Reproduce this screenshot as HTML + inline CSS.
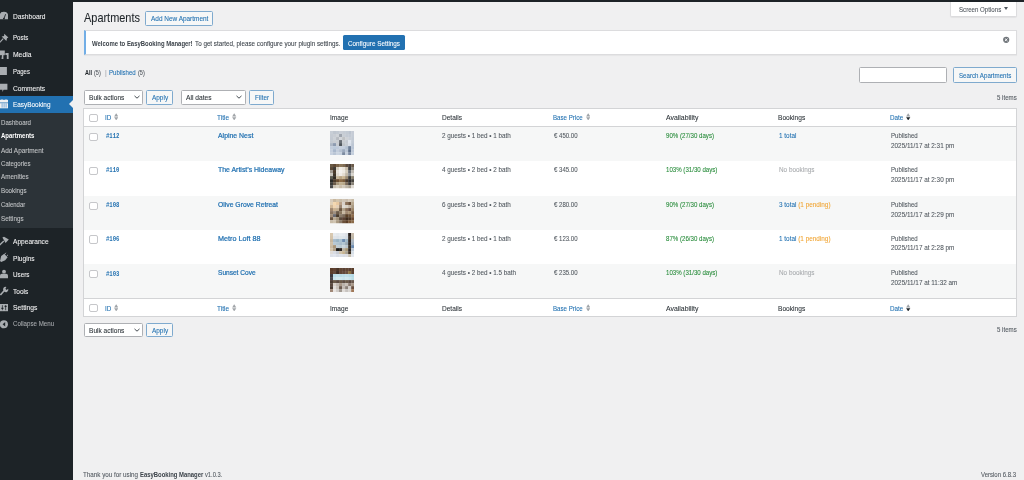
<!DOCTYPE html>
<html><head><meta charset="utf-8"><style>
html,body{margin:0;padding:0;width:1024px;height:480px;overflow:hidden;background:#f0f0f1;font-family:"Liberation Sans",sans-serif;}
.a{position:absolute}
.t{position:absolute;white-space:nowrap;line-height:normal;transform-origin:0 0;font-family:"Liberation Sans",sans-serif}
</style></head><body>
<div class="a" style="left:0.00px;top:0.00px;width:1024.00px;height:2.00px;background:#1d2327"></div>
<div class="a" style="left:0.00px;top:0.00px;width:72.50px;height:480.00px;background:#1d2327"></div>
<div class="a" style="left:0.00px;top:96.00px;width:72.50px;height:16.50px;background:#2271b1"></div>
<div class="a" style="left:0.00px;top:112.50px;width:72.50px;height:115.20px;background:#2c3338"></div>
<div class="a" style="left:68.5px;top:100.2px;width:0;height:0;border-top:4px solid transparent;border-bottom:4px solid transparent;border-right:4px solid #f0f0f1"></div>
<div class="t" style="left:12.80px;top:13.07px;font-size:7.100px;color:#f0f0f1;font-family:'Liberation Sans',sans-serif;font-weight:normal;transform:scaleX(0.9358);-webkit-text-stroke-width:0.08px;">Dashboard</div>
<div class="t" style="left:12.80px;top:34.37px;font-size:7.100px;color:#f0f0f1;font-family:'Liberation Sans',sans-serif;font-weight:normal;transform:scaleX(0.8616);-webkit-text-stroke-width:0.08px;">Posts</div>
<div class="t" style="left:12.80px;top:51.07px;font-size:7.100px;color:#f0f0f1;font-family:'Liberation Sans',sans-serif;font-weight:normal;transform:scaleX(0.9516);-webkit-text-stroke-width:0.08px;">Media</div>
<div class="t" style="left:12.80px;top:68.07px;font-size:7.100px;color:#f0f0f1;font-family:'Liberation Sans',sans-serif;font-weight:normal;transform:scaleX(0.8395);-webkit-text-stroke-width:0.08px;">Pages</div>
<div class="t" style="left:12.80px;top:84.67px;font-size:7.100px;color:#f0f0f1;font-family:'Liberation Sans',sans-serif;font-weight:normal;transform:scaleX(0.9381);-webkit-text-stroke-width:0.08px;">Comments</div>
<div class="t" style="left:12.80px;top:101.07px;font-size:7.100px;color:#ffffff;font-family:'Liberation Sans',sans-serif;font-weight:normal;transform:scaleX(0.9049);-webkit-text-stroke-width:0.08px;">EasyBooking</div>
<div class="t" style="left:12.80px;top:238.07px;font-size:7.100px;color:#f0f0f1;font-family:'Liberation Sans',sans-serif;font-weight:normal;transform:scaleX(0.9298);-webkit-text-stroke-width:0.08px;">Appearance</div>
<div class="t" style="left:12.80px;top:254.57px;font-size:7.100px;color:#f0f0f1;font-family:'Liberation Sans',sans-serif;font-weight:normal;transform:scaleX(0.9276);-webkit-text-stroke-width:0.08px;">Plugins</div>
<div class="t" style="left:12.80px;top:271.07px;font-size:7.100px;color:#f0f0f1;font-family:'Liberation Sans',sans-serif;font-weight:normal;transform:scaleX(0.8846);-webkit-text-stroke-width:0.08px;">Users</div>
<div class="t" style="left:12.80px;top:287.82px;font-size:7.100px;color:#f0f0f1;font-family:'Liberation Sans',sans-serif;font-weight:normal;transform:scaleX(0.9231);-webkit-text-stroke-width:0.08px;">Tools</div>
<div class="t" style="left:12.80px;top:304.37px;font-size:7.100px;color:#f0f0f1;font-family:'Liberation Sans',sans-serif;font-weight:normal;transform:scaleX(0.9511);-webkit-text-stroke-width:0.08px;">Settings</div>
<div class="t" style="left:12.80px;top:320.32px;font-size:7.100px;color:#a7aaad;font-family:'Liberation Sans',sans-serif;font-weight:normal;transform:scaleX(0.8679);-webkit-text-stroke-width:0.08px;">Collapse Menu</div>
<div class="t" style="left:1.25px;top:118.86px;font-size:7.000px;color:#c3c5c7;font-family:'Liberation Sans',sans-serif;font-weight:normal;transform:scaleX(0.8761);-webkit-text-stroke-width:0.08px;">Dashboard</div>
<div class="t" style="left:1.25px;top:132.46px;font-size:7.000px;color:#ffffff;font-family:'Liberation Sans',sans-serif;font-weight:bold;transform:scaleX(0.8587);">Apartments</div>
<div class="t" style="left:1.25px;top:146.66px;font-size:7.000px;color:#c3c5c7;font-family:'Liberation Sans',sans-serif;font-weight:normal;transform:scaleX(0.9178);-webkit-text-stroke-width:0.08px;">Add Apartment</div>
<div class="t" style="left:1.25px;top:159.96px;font-size:7.000px;color:#c3c5c7;font-family:'Liberation Sans',sans-serif;font-weight:normal;transform:scaleX(0.8715);-webkit-text-stroke-width:0.08px;">Categories</div>
<div class="t" style="left:1.25px;top:173.16px;font-size:7.000px;color:#c3c5c7;font-family:'Liberation Sans',sans-serif;font-weight:normal;transform:scaleX(0.9013);-webkit-text-stroke-width:0.08px;">Amenities</div>
<div class="t" style="left:1.25px;top:186.96px;font-size:7.000px;color:#c3c5c7;font-family:'Liberation Sans',sans-serif;font-weight:normal;transform:scaleX(0.8890);-webkit-text-stroke-width:0.08px;">Bookings</div>
<div class="t" style="left:1.25px;top:200.56px;font-size:7.000px;color:#c3c5c7;font-family:'Liberation Sans',sans-serif;font-weight:normal;transform:scaleX(0.8520);-webkit-text-stroke-width:0.08px;">Calendar</div>
<div class="t" style="left:1.25px;top:214.76px;font-size:7.000px;color:#c3c5c7;font-family:'Liberation Sans',sans-serif;font-weight:normal;transform:scaleX(0.8896);-webkit-text-stroke-width:0.08px;">Settings</div>
<svg class="a" style="left:0;top:0" width="12" height="340" viewBox="0 0 12 340">
 <g fill="#a9adb1">
  <path d="M-0.2 19.2 A4.1 4.1 0 0 1 8 19.2 V15.8 A4.1 4.1 0 0 0 -0.2 15.8 Z"/>
  <path d="M-0.2 16.3 A4.1 4.1 0 0 1 8 16.3 V19.3 H-0.2 Z"/>
 </g>
 <path d="M3.9 18.8 L5.6 14.2" stroke="#1d2327" stroke-width="0.9"/>
 <circle cx="3.9" cy="18.6" r="0.9" fill="#1d2327"/>
 <g fill="#a9adb1">
  <path d="M4.2 33.8 L8.4 37.6 L7 38.3 L6.4 41 L1.6 36.6 L4.1 35.9 Z"/>
  <path d="M3.2 38.6 L-0.2 42.4" stroke="#a9adb1" stroke-width="1.1"/>
  <path d="M0 50.5 H4.8 V55.2 H0 Z"/>
  <path d="M2 55 H3.4 V59 H1.5 Z"/><path d="M5.4 53 H8.6 V59 H6.8 V55 H5.4 Z"/>
  <path d="M0 67 H6.9 V75 H0 Z"/>
  <path d="M0 83.8 H7.4 V89.8 H3.6 L2.4 92 V89.8 H0 Z"/>
  <path d="M2.4 237.5 L4 236.8 L8.8 239.6 L5.6 243 Z"/>
  <path d="M3.8 241 L-0.3 245" stroke="#a9adb1" stroke-width="1.4"/>
  <path d="M1.2 256 L4.2 253.8 L7.6 257.2 L5.2 260.2 L1.2 262 L0 261 Z"/>
  <path d="M4.6 254.5 L5.8 252.8 M6.6 256.2 L8 254.8" stroke="#a9adb1" stroke-width="0.9"/>
  <circle cx="4" cy="271.7" r="1.9"/>
  <path d="M0 278.2 V275.6 Q0 273.8 2 273.8 H6 Q8 273.8 8 275.6 V278.2 Z"/>
  <path d="M0.4 295 L4.6 290.2" stroke="#a9adb1" stroke-width="1.6"/>
  <path d="M3.6 290.8 A2.5 2.5 0 0 1 6.4 286.9 L5.4 288.7 L6.6 289.9 L8.2 288.8 A2.5 2.5 0 0 1 4.3 291.6 Z"/>
  <path d="M0 304 H8 V311.2 H0 Z"/>
  <circle cx="3.9" cy="324.3" r="4"/>
 </g>
 <path d="M2.4 305.2 V310.2 M5.6 305.2 V310.2" stroke="#1d2327" stroke-width="0.7"/>
 <path d="M1.4 308.4 H3.4 M4.6 306.4 H6.6" stroke="#1d2327" stroke-width="1.2"/>
 <path d="M5.2 322.1 L2.6 324.3 L5.2 326.5 Z" fill="#1d2327"/>
 <path d="M0 99.8 H8 V108.3 H0 Z" fill="#f0f0f1"/>
 <path d="M0 102.8 H8" stroke="#2271b1" stroke-width="0.7"/>
 <path d="M2.1 103.4 V107.6 M4.1 103.4 V107.6 M6.1 103.4 V107.6" stroke="#5d9ad0" stroke-width="0.8"/>
 <path d="M2 99.3 V100.8 M6 99.3 V100.8" stroke="#f0f0f1" stroke-width="1"/>
</svg>
<div class="t" style="left:84.20px;top:11.39px;font-size:12.400px;color:#1d2327;font-family:'Liberation Sans',sans-serif;font-weight:normal;transform:scaleX(0.8833);-webkit-text-stroke-width:0.08px;">Apartments</div>
<div class="a" style="left:145.10px;top:11.30px;width:67.90px;height:14.50px;background:#f6f7f7;border:1px solid #7faace;border-radius:1.5px;box-sizing:border-box"></div>
<div class="t" style="left:150.60px;top:15.16px;font-size:7.000px;color:#2271b1;font-family:'Liberation Sans',sans-serif;font-weight:normal;transform:scaleX(0.9221);-webkit-text-stroke-width:0.08px;">Add New Apartment</div>
<div class="a" style="left:949.80px;top:2.00px;width:67.00px;height:14.60px;background:#fff;border:1px solid #dcdcde;border-top:none;border-radius:0 0 2px 2px;box-sizing:border-box;box-shadow:0 0.5px 1px rgba(0,0,0,.06)"></div>
<div class="t" style="left:958.70px;top:5.66px;font-size:7.000px;color:#50575e;font-family:'Liberation Sans',sans-serif;font-weight:normal;transform:scaleX(0.8747);-webkit-text-stroke-width:0.08px;">Screen Options</div>
<div class="a" style="left:1004.3px;top:7.4px;width:0;height:0;border-left:2.1px solid transparent;border-right:2.1px solid transparent;border-top:3.1px solid #50575e"></div>
<div class="a" style="left:83.70px;top:30.20px;width:933.30px;height:24.80px;background:#fff;border:1px solid #dcdcde;border-left:2px solid #72aee6;box-sizing:border-box;box-shadow:0 1px 1px rgba(0,0,0,.04)"></div>
<div class="t" style="left:92.20px;top:39.96px;font-size:7.000px;color:#3c434a;font-family:'Liberation Sans',sans-serif;font-weight:bold;transform:scaleX(0.8489);">Welcome to EasyBooking Manager!</div>
<div class="t" style="left:195.20px;top:39.96px;font-size:7.000px;color:#3c434a;font-family:'Liberation Sans',sans-serif;font-weight:normal;transform:scaleX(0.8977);-webkit-text-stroke-width:0.08px;">To get started, please configure your plugin settings.</div>
<div class="a" style="left:343.20px;top:35.40px;width:61.70px;height:14.60px;background:#2271b1;border-radius:1.5px"></div>
<div class="t" style="left:348.00px;top:39.66px;font-size:7.000px;color:#ffffff;font-family:'Liberation Sans',sans-serif;font-weight:normal;transform:scaleX(0.9030);-webkit-text-stroke-width:0.08px;">Configure Settings</div>
<svg class="a" style="left:1002px;top:36px" width="8" height="8" viewBox="0 0 8 8"><circle cx="4.2" cy="3.8" r="3.1" fill="#72777c"/><path d="M2.9 2.5 L5.5 5.1 M5.5 2.5 L2.9 5.1" stroke="#fff" stroke-width="0.9"/></svg>
<div class="t" style="left:85.00px;top:68.76px;font-size:7.000px;color:#1d2327;font-family:'Liberation Sans',sans-serif;font-weight:bold;transform:scaleX(0.7826);">All</div>
<div class="t" style="left:94.00px;top:68.76px;font-size:7.000px;color:#50575e;font-family:'Liberation Sans',sans-serif;font-weight:normal;transform:scaleX(0.7949);-webkit-text-stroke-width:0.08px;">(5)</div>
<div class="t" style="left:104.60px;top:68.76px;font-size:7.000px;color:#a7aaad;font-family:'Liberation Sans',sans-serif;font-weight:normal;transform:scaleX(0.9450);-webkit-text-stroke-width:0.08px;">|</div>
<div class="t" style="left:109.00px;top:68.76px;font-size:7.000px;color:#2271b1;font-family:'Liberation Sans',sans-serif;font-weight:normal;transform:scaleX(0.8685);-webkit-text-stroke-width:0.08px;">Published</div>
<div class="t" style="left:137.80px;top:68.76px;font-size:7.000px;color:#50575e;font-family:'Liberation Sans',sans-serif;font-weight:normal;transform:scaleX(0.7949);-webkit-text-stroke-width:0.08px;">(5)</div>
<div class="a" style="left:859.30px;top:67.20px;width:87.90px;height:15.60px;background:#fff;border:1px solid #aeb0b4;border-radius:1.5px;box-sizing:border-box"></div>
<div class="a" style="left:952.80px;top:67.20px;width:64.20px;height:15.60px;background:#f6f7f7;border:1px solid #7faace;border-radius:1.5px;box-sizing:border-box"></div>
<div class="t" style="left:958.70px;top:71.66px;font-size:7.000px;color:#2271b1;font-family:'Liberation Sans',sans-serif;font-weight:normal;transform:scaleX(0.8786);-webkit-text-stroke-width:0.08px;">Search Apartments</div>
<div class="a" style="left:84.40px;top:90.20px;width:58.60px;height:14.40px;background:#fff;border:1px solid #aeb0b4;border-radius:1.5px;box-sizing:border-box"></div>
<div class="t" style="left:88.90px;top:94.16px;font-size:7.000px;color:#2c3338;font-family:'Liberation Sans',sans-serif;font-weight:normal;transform:scaleX(0.9380);-webkit-text-stroke-width:0.08px;">Bulk actions</div>
<svg class="a" style="left:133.50px;top:95.40px" width="6" height="4" viewBox="0 0 6 4"><path d="M0.5 0.9 L3 3.2 L5.5 0.9" fill="none" stroke="#3c434a" stroke-width="0.95"/></svg>
<div class="a" style="left:146.15px;top:90.20px;width:26.85px;height:14.40px;background:#f6f7f7;border:1px solid #7faace;border-radius:1.5px;box-sizing:border-box"></div>
<div class="t" style="left:151.70px;top:94.16px;font-size:7.000px;color:#2271b1;font-family:'Liberation Sans',sans-serif;font-weight:normal;transform:scaleX(0.9195);-webkit-text-stroke-width:0.08px;">Apply</div>
<div class="t" style="left:996.50px;top:93.56px;font-size:7.000px;color:#50575e;font-family:'Liberation Sans',sans-serif;font-weight:normal;transform:scaleX(0.8732);-webkit-text-stroke-width:0.08px;">5 items</div>
<div class="a" style="left:181.30px;top:90.20px;width:64.80px;height:14.40px;background:#fff;border:1px solid #aeb0b4;border-radius:1.5px;box-sizing:border-box"></div>
<div class="t" style="left:185.70px;top:94.16px;font-size:7.000px;color:#2c3338;font-family:'Liberation Sans',sans-serif;font-weight:normal;transform:scaleX(0.9535);-webkit-text-stroke-width:0.08px;">All dates</div>
<svg class="a" style="left:236.20px;top:95.40px" width="6" height="4" viewBox="0 0 6 4"><path d="M0.5 0.9 L3 3.2 L5.5 0.9" fill="none" stroke="#3c434a" stroke-width="0.95"/></svg>
<div class="a" style="left:249.00px;top:90.20px;width:24.70px;height:14.40px;background:#f6f7f7;border:1px solid #7faace;border-radius:1.5px;box-sizing:border-box"></div>
<div class="t" style="left:254.50px;top:94.16px;font-size:7.000px;color:#2271b1;font-family:'Liberation Sans',sans-serif;font-weight:normal;transform:scaleX(0.9001);-webkit-text-stroke-width:0.08px;">Filter</div>
<div class="a" style="left:83.00px;top:108.00px;width:934.00px;height:209.00px;background:#fff;border:1px solid #d3d4d6;box-sizing:border-box"></div>
<div class="a" style="left:84.00px;top:126.00px;width:932.00px;height:1.00px;background:#d3d4d6"></div>
<div class="a" style="left:84.00px;top:127.00px;width:932.00px;height:33.80px;background:#f6f7f7"></div>
<div class="a" style="left:84.00px;top:195.80px;width:932.00px;height:33.90px;background:#f6f7f7"></div>
<div class="a" style="left:84.00px;top:264.20px;width:932.00px;height:33.80px;background:#f6f7f7"></div>
<div class="a" style="left:84.00px;top:298.00px;width:932.00px;height:1.00px;background:#d3d4d6"></div>
<div class="a" style="left:89.00px;top:113.70px;width:8.50px;height:8.20px;background:#fff;border:1px solid #c6c7ca;border-radius:2px;box-sizing:border-box"></div>
<div class="t" style="left:104.70px;top:114.16px;font-size:7.000px;color:#2271b1;font-family:'Liberation Sans',sans-serif;font-weight:normal;transform:scaleX(0.9000);-webkit-text-stroke-width:0.08px;">ID</div>
<svg class="a" style="left:114.00px;top:112.80px" width="4.4" height="7.6" viewBox="0 0 4.4 7.6"><path d="M0.1 3.4 L2.2 0.2 L4.3 3.4 Z" fill="#a0a4a8"/><path d="M0.1 4.2 L2.2 7.4 L4.3 4.2 Z" fill="#a0a4a8"/></svg>
<div class="t" style="left:216.90px;top:114.16px;font-size:7.000px;color:#2271b1;font-family:'Liberation Sans',sans-serif;font-weight:normal;transform:scaleX(0.9256);-webkit-text-stroke-width:0.08px;">Title</div>
<svg class="a" style="left:232.30px;top:112.80px" width="4.4" height="7.6" viewBox="0 0 4.4 7.6"><path d="M0.1 3.4 L2.2 0.2 L4.3 3.4 Z" fill="#a0a4a8"/><path d="M0.1 4.2 L2.2 7.4 L4.3 4.2 Z" fill="#a0a4a8"/></svg>
<div class="t" style="left:329.70px;top:114.16px;font-size:7.000px;color:#2c3338;font-family:'Liberation Sans',sans-serif;font-weight:normal;transform:scaleX(0.9407);-webkit-text-stroke-width:0.08px;">Image</div>
<div class="t" style="left:442.00px;top:114.16px;font-size:7.000px;color:#2c3338;font-family:'Liberation Sans',sans-serif;font-weight:normal;transform:scaleX(0.9348);-webkit-text-stroke-width:0.08px;">Details</div>
<div class="t" style="left:553.00px;top:114.16px;font-size:7.000px;color:#2271b1;font-family:'Liberation Sans',sans-serif;font-weight:normal;transform:scaleX(0.8804);-webkit-text-stroke-width:0.08px;">Base Price</div>
<svg class="a" style="left:586.00px;top:112.80px" width="4.4" height="7.6" viewBox="0 0 4.4 7.6"><path d="M0.1 3.4 L2.2 0.2 L4.3 3.4 Z" fill="#a0a4a8"/><path d="M0.1 4.2 L2.2 7.4 L4.3 4.2 Z" fill="#a0a4a8"/></svg>
<div class="t" style="left:666.00px;top:114.16px;font-size:7.000px;color:#2c3338;font-family:'Liberation Sans',sans-serif;font-weight:normal;transform:scaleX(0.9836);-webkit-text-stroke-width:0.08px;">Availability</div>
<div class="t" style="left:778.40px;top:114.16px;font-size:7.000px;color:#2c3338;font-family:'Liberation Sans',sans-serif;font-weight:normal;transform:scaleX(0.9446);-webkit-text-stroke-width:0.08px;">Bookings</div>
<div class="t" style="left:890.00px;top:114.16px;font-size:7.000px;color:#2271b1;font-family:'Liberation Sans',sans-serif;font-weight:normal;transform:scaleX(0.9063);-webkit-text-stroke-width:0.08px;">Date</div>
<svg class="a" style="left:906.20px;top:112.80px" width="4.4" height="7.6" viewBox="0 0 4.4 7.6"><path d="M0.1 3.4 L2.2 0.2 L4.3 3.4 Z" fill="#a0a4a8"/><path d="M0.1 4.2 L2.2 7.4 L4.3 4.2 Z" fill="#1d2327"/></svg>
<div class="a" style="left:89.00px;top:304.00px;width:8.50px;height:8.20px;background:#fff;border:1px solid #c6c7ca;border-radius:2px;box-sizing:border-box"></div>
<div class="t" style="left:104.70px;top:304.96px;font-size:7.000px;color:#2271b1;font-family:'Liberation Sans',sans-serif;font-weight:normal;transform:scaleX(0.9000);-webkit-text-stroke-width:0.08px;">ID</div>
<svg class="a" style="left:114.00px;top:303.60px" width="4.4" height="7.6" viewBox="0 0 4.4 7.6"><path d="M0.1 3.4 L2.2 0.2 L4.3 3.4 Z" fill="#a0a4a8"/><path d="M0.1 4.2 L2.2 7.4 L4.3 4.2 Z" fill="#a0a4a8"/></svg>
<div class="t" style="left:216.90px;top:304.96px;font-size:7.000px;color:#2271b1;font-family:'Liberation Sans',sans-serif;font-weight:normal;transform:scaleX(0.9256);-webkit-text-stroke-width:0.08px;">Title</div>
<svg class="a" style="left:232.30px;top:303.60px" width="4.4" height="7.6" viewBox="0 0 4.4 7.6"><path d="M0.1 3.4 L2.2 0.2 L4.3 3.4 Z" fill="#a0a4a8"/><path d="M0.1 4.2 L2.2 7.4 L4.3 4.2 Z" fill="#a0a4a8"/></svg>
<div class="t" style="left:329.70px;top:304.96px;font-size:7.000px;color:#2c3338;font-family:'Liberation Sans',sans-serif;font-weight:normal;transform:scaleX(0.9407);-webkit-text-stroke-width:0.08px;">Image</div>
<div class="t" style="left:442.00px;top:304.96px;font-size:7.000px;color:#2c3338;font-family:'Liberation Sans',sans-serif;font-weight:normal;transform:scaleX(0.9348);-webkit-text-stroke-width:0.08px;">Details</div>
<div class="t" style="left:553.00px;top:304.96px;font-size:7.000px;color:#2271b1;font-family:'Liberation Sans',sans-serif;font-weight:normal;transform:scaleX(0.8804);-webkit-text-stroke-width:0.08px;">Base Price</div>
<svg class="a" style="left:586.00px;top:303.60px" width="4.4" height="7.6" viewBox="0 0 4.4 7.6"><path d="M0.1 3.4 L2.2 0.2 L4.3 3.4 Z" fill="#a0a4a8"/><path d="M0.1 4.2 L2.2 7.4 L4.3 4.2 Z" fill="#a0a4a8"/></svg>
<div class="t" style="left:666.00px;top:304.96px;font-size:7.000px;color:#2c3338;font-family:'Liberation Sans',sans-serif;font-weight:normal;transform:scaleX(0.9836);-webkit-text-stroke-width:0.08px;">Availability</div>
<div class="t" style="left:778.40px;top:304.96px;font-size:7.000px;color:#2c3338;font-family:'Liberation Sans',sans-serif;font-weight:normal;transform:scaleX(0.9446);-webkit-text-stroke-width:0.08px;">Bookings</div>
<div class="t" style="left:890.00px;top:304.96px;font-size:7.000px;color:#2271b1;font-family:'Liberation Sans',sans-serif;font-weight:normal;transform:scaleX(0.9063);-webkit-text-stroke-width:0.08px;">Date</div>
<svg class="a" style="left:906.20px;top:303.60px" width="4.4" height="7.6" viewBox="0 0 4.4 7.6"><path d="M0.1 3.4 L2.2 0.2 L4.3 3.4 Z" fill="#a0a4a8"/><path d="M0.1 4.2 L2.2 7.4 L4.3 4.2 Z" fill="#1d2327"/></svg>
<div class="a" style="left:89.00px;top:132.70px;width:8.50px;height:8.20px;background:#fff;border:1px solid #c6c7ca;border-radius:2px;box-sizing:border-box"></div>
<div class="t" style="left:105.50px;top:132.49px;font-size:7.000px;color:#2271b1;font-family:'Liberation Mono',monospace;font-weight:bold;transform:scaleX(0.8034);">#112</div>
<div class="t" style="left:217.70px;top:132.06px;font-size:7.000px;color:#2271b1;font-family:'Liberation Sans',sans-serif;font-weight:normal;transform:scaleX(0.9862);-webkit-text-stroke-width:0.08px;-webkit-text-stroke-width:0.22px;">Alpine Nest</div>
<svg class="a" style="left:329.6px;top:130.60px" width="24.2" height="24.2" viewBox="0 0 24 24" preserveAspectRatio="none"><filter id="bl0" x="0" y="0" width="1" height="1"><feGaussianBlur stdDeviation="0.75" edgeMode="duplicate"/></filter><g filter="url(#bl0)"><rect x="0" y="0" width="3.05" height="3.05" fill="#c8ced6"/><rect x="3" y="0" width="3.05" height="3.05" fill="#bfc6cf"/><rect x="6" y="0" width="3.05" height="3.05" fill="#c2c9d2"/><rect x="9" y="0" width="3.05" height="3.05" fill="#c9ced6"/><rect x="12" y="0" width="3.05" height="3.05" fill="#c6ccd4"/><rect x="15" y="0" width="3.05" height="3.05" fill="#c3cad3"/><rect x="18" y="0" width="3.05" height="3.05" fill="#bcc4cf"/><rect x="21" y="0" width="3.05" height="3.05" fill="#c6ccd6"/><rect x="0" y="3" width="3.05" height="3.05" fill="#c5cbd3"/><rect x="3" y="3" width="3.05" height="3.05" fill="#c8cdd4"/><rect x="6" y="3" width="3.05" height="3.05" fill="#cfd3d8"/><rect x="9" y="3" width="3.05" height="3.05" fill="#9ea4ad"/><rect x="12" y="3" width="3.05" height="3.05" fill="#c9ced5"/><rect x="15" y="3" width="3.05" height="3.05" fill="#c4cad3"/><rect x="18" y="3" width="3.05" height="3.05" fill="#c2c9d3"/><rect x="21" y="3" width="3.05" height="3.05" fill="#c5ccd6"/><rect x="0" y="6" width="3.05" height="3.05" fill="#c3c9d1"/><rect x="3" y="6" width="3.05" height="3.05" fill="#ccd1d7"/><rect x="6" y="6" width="3.05" height="3.05" fill="#b8bcc2"/><rect x="9" y="6" width="3.05" height="3.05" fill="#d2d5d9"/><rect x="12" y="6" width="3.05" height="3.05" fill="#c0c2c4"/><rect x="15" y="6" width="3.05" height="3.05" fill="#cfd2d6"/><rect x="18" y="6" width="3.05" height="3.05" fill="#c8ced6"/><rect x="21" y="6" width="3.05" height="3.05" fill="#c2cad4"/><rect x="0" y="9" width="3.05" height="3.05" fill="#c4cad2"/><rect x="3" y="9" width="3.05" height="3.05" fill="#c8cdd3"/><rect x="6" y="9" width="3.05" height="3.05" fill="#c9cdd2"/><rect x="9" y="9" width="3.05" height="3.05" fill="#6b6f77"/><rect x="12" y="9" width="3.05" height="3.05" fill="#c8ccd1"/><rect x="15" y="9" width="3.05" height="3.05" fill="#c5cad2"/><rect x="18" y="9" width="3.05" height="3.05" fill="#dfe5ee"/><rect x="21" y="9" width="3.05" height="3.05" fill="#c3cbd6"/><rect x="0" y="12" width="3.05" height="3.05" fill="#aeb8c6"/><rect x="3" y="12" width="3.05" height="3.05" fill="#8d9bb0"/><rect x="6" y="12" width="3.05" height="3.05" fill="#c7ccd2"/><rect x="9" y="12" width="3.05" height="3.05" fill="#50545c"/><rect x="12" y="12" width="3.05" height="3.05" fill="#bfc4ca"/><rect x="15" y="12" width="3.05" height="3.05" fill="#c6ccd4"/><rect x="18" y="12" width="3.05" height="3.05" fill="#d8dee8"/><rect x="21" y="12" width="3.05" height="3.05" fill="#bcc6d3"/><rect x="0" y="15" width="3.05" height="3.05" fill="#c2cddc"/><rect x="3" y="15" width="3.05" height="3.05" fill="#bccadb"/><rect x="6" y="15" width="3.05" height="3.05" fill="#bfcadb"/><rect x="9" y="15" width="3.05" height="3.05" fill="#c6d0de"/><rect x="12" y="15" width="3.05" height="3.05" fill="#c4cede"/><rect x="15" y="15" width="3.05" height="3.05" fill="#b4c1d2"/><rect x="18" y="15" width="3.05" height="3.05" fill="#6e7f98"/><rect x="21" y="15" width="3.05" height="3.05" fill="#b9c5d5"/><rect x="0" y="18" width="3.05" height="3.05" fill="#c4cfde"/><rect x="3" y="18" width="3.05" height="3.05" fill="#a9b8cc"/><rect x="6" y="18" width="3.05" height="3.05" fill="#c2cddc"/><rect x="9" y="18" width="3.05" height="3.05" fill="#b4c0d0"/><rect x="12" y="18" width="3.05" height="3.05" fill="#9aa9bd"/><rect x="15" y="18" width="3.05" height="3.05" fill="#b7c3d3"/><rect x="18" y="18" width="3.05" height="3.05" fill="#5d6f8a"/><rect x="21" y="18" width="3.05" height="3.05" fill="#bfcad9"/><rect x="0" y="21" width="3.05" height="3.05" fill="#c7d1df"/><rect x="3" y="21" width="3.05" height="3.05" fill="#b9c5d5"/><rect x="6" y="21" width="3.05" height="3.05" fill="#c9d3e0"/><rect x="9" y="21" width="3.05" height="3.05" fill="#c3cedc"/><rect x="12" y="21" width="3.05" height="3.05" fill="#7c8ba0"/><rect x="15" y="21" width="3.05" height="3.05" fill="#c3cedc"/><rect x="18" y="21" width="3.05" height="3.05" fill="#7b8ba3"/><rect x="21" y="21" width="3.05" height="3.05" fill="#c4cfdd"/></g></svg>
<div class="t" style="left:442.00px;top:131.86px;font-size:7.000px;color:#50575e;font-family:'Liberation Sans',sans-serif;font-weight:normal;transform:scaleX(0.9039);-webkit-text-stroke-width:0.08px;">2 guests • 1 bed • 1 bath</div>
<div class="t" style="left:553.75px;top:131.86px;font-size:7.000px;color:#50575e;font-family:'Liberation Sans',sans-serif;font-weight:normal;transform:scaleX(0.8625);-webkit-text-stroke-width:0.08px;">€ 450.00</div>
<div class="t" style="left:666.00px;top:131.86px;font-size:7.000px;color:#258a38;font-family:'Liberation Sans',sans-serif;font-weight:normal;transform:scaleX(0.8749);-webkit-text-stroke-width:0.08px;">90% (27/30 days)</div>
<div class="t" style="left:778.75px;top:131.86px;font-size:7.000px;transform:scaleX(0.9128);-webkit-text-stroke-width:0.08px;"><span style="color:#2271b1;font-weight:normal">1 total</span></div>
<div class="t" style="left:890.50px;top:131.86px;font-size:7.000px;color:#50575e;font-family:'Liberation Sans',sans-serif;font-weight:normal;transform:scaleX(0.8685);-webkit-text-stroke-width:0.08px;">Published</div>
<div class="t" style="left:890.50px;top:141.76px;font-size:7.000px;color:#50575e;font-family:'Liberation Sans',sans-serif;font-weight:normal;transform:scaleX(0.9104);-webkit-text-stroke-width:0.08px;">2025/11/17 at 2:31 pm</div>
<div class="a" style="left:89.00px;top:166.50px;width:8.50px;height:8.20px;background:#fff;border:1px solid #c6c7ca;border-radius:2px;box-sizing:border-box"></div>
<div class="t" style="left:105.50px;top:166.29px;font-size:7.000px;color:#2271b1;font-family:'Liberation Mono',monospace;font-weight:bold;transform:scaleX(0.8034);">#110</div>
<div class="t" style="left:217.70px;top:165.86px;font-size:7.000px;color:#2271b1;font-family:'Liberation Sans',sans-serif;font-weight:normal;transform:scaleX(0.9900);-webkit-text-stroke-width:0.08px;-webkit-text-stroke-width:0.22px;">The Artist’s Hideaway</div>
<svg class="a" style="left:329.6px;top:164.40px" width="24.2" height="24.2" viewBox="0 0 24 24" preserveAspectRatio="none"><filter id="bl1" x="0" y="0" width="1" height="1"><feGaussianBlur stdDeviation="0.75" edgeMode="duplicate"/></filter><g filter="url(#bl1)"><rect x="0" y="0" width="3.05" height="3.05" fill="#6b5a45"/><rect x="3" y="0" width="3.05" height="3.05" fill="#5e4a35"/><rect x="6" y="0" width="3.05" height="3.05" fill="#7a6448"/><rect x="9" y="0" width="3.05" height="3.05" fill="#8a7558"/><rect x="12" y="0" width="3.05" height="3.05" fill="#7e6a50"/><rect x="15" y="0" width="3.05" height="3.05" fill="#5a4a3a"/><rect x="18" y="0" width="3.05" height="3.05" fill="#4a4038"/><rect x="21" y="0" width="3.05" height="3.05" fill="#6a5a48"/><rect x="0" y="3" width="3.05" height="3.05" fill="#5a4a38"/><rect x="3" y="3" width="3.05" height="3.05" fill="#3e3a34"/><rect x="6" y="3" width="3.05" height="3.05" fill="#d8d0c0"/><rect x="9" y="3" width="3.05" height="3.05" fill="#f0ece4"/><rect x="12" y="3" width="3.05" height="3.05" fill="#e8e2d8"/><rect x="15" y="3" width="3.05" height="3.05" fill="#c8bca8"/><rect x="18" y="3" width="3.05" height="3.05" fill="#3a3a3a"/><rect x="21" y="3" width="3.05" height="3.05" fill="#8a8478"/><rect x="0" y="6" width="3.05" height="3.05" fill="#a09a90"/><rect x="3" y="6" width="3.05" height="3.05" fill="#4a3a2c"/><rect x="6" y="6" width="3.05" height="3.05" fill="#e8e4dc"/><rect x="9" y="6" width="3.05" height="3.05" fill="#f4f2ee"/><rect x="12" y="6" width="3.05" height="3.05" fill="#eeeae2"/><rect x="15" y="6" width="3.05" height="3.05" fill="#d4ccbc"/><rect x="18" y="6" width="3.05" height="3.05" fill="#6a6e72"/><rect x="21" y="6" width="3.05" height="3.05" fill="#c0bcb4"/><rect x="0" y="9" width="3.05" height="3.05" fill="#c8c4bc"/><rect x="3" y="9" width="3.05" height="3.05" fill="#3c3428"/><rect x="6" y="9" width="3.05" height="3.05" fill="#e0dad0"/><rect x="9" y="9" width="3.05" height="3.05" fill="#f0ece6"/><rect x="12" y="9" width="3.05" height="3.05" fill="#e4dcd0"/><rect x="15" y="9" width="3.05" height="3.05" fill="#c0b8a8"/><rect x="18" y="9" width="3.05" height="3.05" fill="#8a8e92"/><rect x="21" y="9" width="3.05" height="3.05" fill="#d8d4cc"/><rect x="0" y="12" width="3.05" height="3.05" fill="#5a5a50"/><rect x="3" y="12" width="3.05" height="3.05" fill="#2e2a24"/><rect x="6" y="12" width="3.05" height="3.05" fill="#c8b89c"/><rect x="9" y="12" width="3.05" height="3.05" fill="#b8a484"/><rect x="12" y="12" width="3.05" height="3.05" fill="#c8b490"/><rect x="15" y="12" width="3.05" height="3.05" fill="#9a8a72"/><rect x="18" y="12" width="3.05" height="3.05" fill="#3a3a38"/><rect x="21" y="12" width="3.05" height="3.05" fill="#8a8270"/><rect x="0" y="15" width="3.05" height="3.05" fill="#2a2a28"/><rect x="3" y="15" width="3.05" height="3.05" fill="#4a3a2a"/><rect x="6" y="15" width="3.05" height="3.05" fill="#6a4e30"/><rect x="9" y="15" width="3.05" height="3.05" fill="#8a6a44"/><rect x="12" y="15" width="3.05" height="3.05" fill="#7a5c3a"/><rect x="15" y="15" width="3.05" height="3.05" fill="#4a3a2c"/><rect x="18" y="15" width="3.05" height="3.05" fill="#2e2c2a"/><rect x="21" y="15" width="3.05" height="3.05" fill="#4a4640"/><rect x="0" y="18" width="3.05" height="3.05" fill="#3a3a38"/><rect x="3" y="18" width="3.05" height="3.05" fill="#6a5a48"/><rect x="6" y="18" width="3.05" height="3.05" fill="#a8987c"/><rect x="9" y="18" width="3.05" height="3.05" fill="#c0b090"/><rect x="12" y="18" width="3.05" height="3.05" fill="#b8a888"/><rect x="15" y="18" width="3.05" height="3.05" fill="#7a6a58"/><rect x="18" y="18" width="3.05" height="3.05" fill="#3a3834"/><rect x="21" y="18" width="3.05" height="3.05" fill="#8a8478"/><rect x="0" y="21" width="3.05" height="3.05" fill="#4a4a48"/><rect x="3" y="21" width="3.05" height="3.05" fill="#c8c0b0"/><rect x="6" y="21" width="3.05" height="3.05" fill="#d8d0c0"/><rect x="9" y="21" width="3.05" height="3.05" fill="#c8bca8"/><rect x="12" y="21" width="3.05" height="3.05" fill="#d0c8b8"/><rect x="15" y="21" width="3.05" height="3.05" fill="#bcb4a4"/><rect x="18" y="21" width="3.05" height="3.05" fill="#a8a090"/><rect x="21" y="21" width="3.05" height="3.05" fill="#e0dcd4"/></g></svg>
<div class="t" style="left:442.00px;top:165.66px;font-size:7.000px;color:#50575e;font-family:'Liberation Sans',sans-serif;font-weight:normal;transform:scaleX(0.9039);-webkit-text-stroke-width:0.08px;">4 guests • 2 bed • 2 bath</div>
<div class="t" style="left:553.75px;top:165.66px;font-size:7.000px;color:#50575e;font-family:'Liberation Sans',sans-serif;font-weight:normal;transform:scaleX(0.8625);-webkit-text-stroke-width:0.08px;">€ 345.00</div>
<div class="t" style="left:666.00px;top:165.66px;font-size:7.000px;color:#258a38;font-family:'Liberation Sans',sans-serif;font-weight:normal;transform:scaleX(0.8749);-webkit-text-stroke-width:0.08px;">103% (31/30 days)</div>
<div class="t" style="left:778.75px;top:165.66px;font-size:7.000px;transform:scaleX(0.9128);-webkit-text-stroke-width:0.08px;"><span style="color:#a7aaad;font-weight:normal">No bookings</span></div>
<div class="t" style="left:890.50px;top:165.66px;font-size:7.000px;color:#50575e;font-family:'Liberation Sans',sans-serif;font-weight:normal;transform:scaleX(0.8685);-webkit-text-stroke-width:0.08px;">Published</div>
<div class="t" style="left:890.50px;top:175.56px;font-size:7.000px;color:#50575e;font-family:'Liberation Sans',sans-serif;font-weight:normal;transform:scaleX(0.9104);-webkit-text-stroke-width:0.08px;">2025/11/17 at 2:30 pm</div>
<div class="a" style="left:89.00px;top:201.50px;width:8.50px;height:8.20px;background:#fff;border:1px solid #c6c7ca;border-radius:2px;box-sizing:border-box"></div>
<div class="t" style="left:105.50px;top:201.29px;font-size:7.000px;color:#2271b1;font-family:'Liberation Mono',monospace;font-weight:bold;transform:scaleX(0.8034);">#108</div>
<div class="t" style="left:217.70px;top:200.86px;font-size:7.000px;color:#2271b1;font-family:'Liberation Sans',sans-serif;font-weight:normal;transform:scaleX(0.9701);-webkit-text-stroke-width:0.08px;-webkit-text-stroke-width:0.22px;">Olive Grove Retreat</div>
<svg class="a" style="left:329.6px;top:199.40px" width="24.2" height="24.2" viewBox="0 0 24 24" preserveAspectRatio="none"><filter id="bl2" x="0" y="0" width="1" height="1"><feGaussianBlur stdDeviation="0.75" edgeMode="duplicate"/></filter><g filter="url(#bl2)"><rect x="0" y="0" width="3.05" height="3.05" fill="#d8ccbc"/><rect x="3" y="0" width="3.05" height="3.05" fill="#c8b8a0"/><rect x="6" y="0" width="3.05" height="3.05" fill="#d4c4ac"/><rect x="9" y="0" width="3.05" height="3.05" fill="#c8bca8"/><rect x="12" y="0" width="3.05" height="3.05" fill="#d0c4b4"/><rect x="15" y="0" width="3.05" height="3.05" fill="#c8bcac"/><rect x="18" y="0" width="3.05" height="3.05" fill="#d4c8b8"/><rect x="21" y="0" width="3.05" height="3.05" fill="#c8bca8"/><rect x="0" y="3" width="3.05" height="3.05" fill="#e0d0b8"/><rect x="3" y="3" width="3.05" height="3.05" fill="#f4d8b0"/><rect x="6" y="3" width="3.05" height="3.05" fill="#e8c8a0"/><rect x="9" y="3" width="3.05" height="3.05" fill="#b8a088"/><rect x="12" y="3" width="3.05" height="3.05" fill="#d8d0c8"/><rect x="15" y="3" width="3.05" height="3.05" fill="#8a7058"/><rect x="18" y="3" width="3.05" height="3.05" fill="#6a5038"/><rect x="21" y="3" width="3.05" height="3.05" fill="#b8a890"/><rect x="0" y="6" width="3.05" height="3.05" fill="#d0b898"/><rect x="3" y="6" width="3.05" height="3.05" fill="#f0d4b0"/><rect x="6" y="6" width="3.05" height="3.05" fill="#e4d0b8"/><rect x="9" y="6" width="3.05" height="3.05" fill="#9a8470"/><rect x="12" y="6" width="3.05" height="3.05" fill="#e0dcd4"/><rect x="15" y="6" width="3.05" height="3.05" fill="#d8d0c4"/><rect x="18" y="6" width="3.05" height="3.05" fill="#c0b4a4"/><rect x="21" y="6" width="3.05" height="3.05" fill="#a89880"/><rect x="0" y="9" width="3.05" height="3.05" fill="#a08870"/><rect x="3" y="9" width="3.05" height="3.05" fill="#c8b090"/><rect x="6" y="9" width="3.05" height="3.05" fill="#c0ac90"/><rect x="9" y="9" width="3.05" height="3.05" fill="#6a5440"/><rect x="12" y="9" width="3.05" height="3.05" fill="#b0a088"/><rect x="15" y="9" width="3.05" height="3.05" fill="#8a7058"/><rect x="18" y="9" width="3.05" height="3.05" fill="#6a5040"/><rect x="21" y="9" width="3.05" height="3.05" fill="#9a8468"/><rect x="0" y="12" width="3.05" height="3.05" fill="#8a7460"/><rect x="3" y="12" width="3.05" height="3.05" fill="#a09080"/><rect x="6" y="12" width="3.05" height="3.05" fill="#6a5a48"/><rect x="9" y="12" width="3.05" height="3.05" fill="#8a7860"/><rect x="12" y="12" width="3.05" height="3.05" fill="#c8b8a0"/><rect x="15" y="12" width="3.05" height="3.05" fill="#a08870"/><rect x="18" y="12" width="3.05" height="3.05" fill="#a89070"/><rect x="21" y="12" width="3.05" height="3.05" fill="#7a6048"/><rect x="0" y="15" width="3.05" height="3.05" fill="#a08c78"/><rect x="3" y="15" width="3.05" height="3.05" fill="#6a6a70"/><rect x="6" y="15" width="3.05" height="3.05" fill="#4a3a2a"/><rect x="9" y="15" width="3.05" height="3.05" fill="#8a7a68"/><rect x="12" y="15" width="3.05" height="3.05" fill="#7a6a58"/><rect x="15" y="15" width="3.05" height="3.05" fill="#5a4028"/><rect x="18" y="15" width="3.05" height="3.05" fill="#6a5038"/><rect x="21" y="15" width="3.05" height="3.05" fill="#8a6a4a"/><rect x="0" y="18" width="3.05" height="3.05" fill="#6a5440"/><rect x="3" y="18" width="3.05" height="3.05" fill="#b8a890"/><rect x="6" y="18" width="3.05" height="3.05" fill="#a09078"/><rect x="9" y="18" width="3.05" height="3.05" fill="#5a4a3a"/><rect x="12" y="18" width="3.05" height="3.05" fill="#5a4030"/><rect x="15" y="18" width="3.05" height="3.05" fill="#3e2c1c"/><rect x="18" y="18" width="3.05" height="3.05" fill="#4a3420"/><rect x="21" y="18" width="3.05" height="3.05" fill="#6a4a30"/><rect x="0" y="21" width="3.05" height="3.05" fill="#c8bca8"/><rect x="3" y="21" width="3.05" height="3.05" fill="#d0c4b0"/><rect x="6" y="21" width="3.05" height="3.05" fill="#a89880"/><rect x="9" y="21" width="3.05" height="3.05" fill="#8a7a68"/><rect x="12" y="21" width="3.05" height="3.05" fill="#6a5038"/><rect x="15" y="21" width="3.05" height="3.05" fill="#5a3e26"/><rect x="18" y="21" width="3.05" height="3.05" fill="#7a5838"/><rect x="21" y="21" width="3.05" height="3.05" fill="#8a6a48"/></g></svg>
<div class="t" style="left:442.00px;top:200.66px;font-size:7.000px;color:#50575e;font-family:'Liberation Sans',sans-serif;font-weight:normal;transform:scaleX(0.9039);-webkit-text-stroke-width:0.08px;">6 guests • 3 bed • 2 bath</div>
<div class="t" style="left:553.75px;top:200.66px;font-size:7.000px;color:#50575e;font-family:'Liberation Sans',sans-serif;font-weight:normal;transform:scaleX(0.8625);-webkit-text-stroke-width:0.08px;">€ 280.00</div>
<div class="t" style="left:666.00px;top:200.66px;font-size:7.000px;color:#258a38;font-family:'Liberation Sans',sans-serif;font-weight:normal;transform:scaleX(0.8749);-webkit-text-stroke-width:0.08px;">90% (27/30 days)</div>
<div class="t" style="left:778.75px;top:200.66px;font-size:7.000px;transform:scaleX(0.9128);-webkit-text-stroke-width:0.08px;"><span style="color:#2271b1;font-weight:normal">3 total</span><span style="color:#f0a433;font-weight:normal"> (1 pending)</span></div>
<div class="t" style="left:890.50px;top:200.66px;font-size:7.000px;color:#50575e;font-family:'Liberation Sans',sans-serif;font-weight:normal;transform:scaleX(0.8685);-webkit-text-stroke-width:0.08px;">Published</div>
<div class="t" style="left:890.50px;top:210.56px;font-size:7.000px;color:#50575e;font-family:'Liberation Sans',sans-serif;font-weight:normal;transform:scaleX(0.9104);-webkit-text-stroke-width:0.08px;">2025/11/17 at 2:29 pm</div>
<div class="a" style="left:89.00px;top:235.40px;width:8.50px;height:8.20px;background:#fff;border:1px solid #c6c7ca;border-radius:2px;box-sizing:border-box"></div>
<div class="t" style="left:105.50px;top:235.19px;font-size:7.000px;color:#2271b1;font-family:'Liberation Mono',monospace;font-weight:bold;transform:scaleX(0.8034);">#106</div>
<div class="t" style="left:217.70px;top:234.76px;font-size:7.000px;color:#2271b1;font-family:'Liberation Sans',sans-serif;font-weight:normal;transform:scaleX(1.0305);-webkit-text-stroke-width:0.08px;-webkit-text-stroke-width:0.22px;">Metro Loft 88</div>
<svg class="a" style="left:329.6px;top:233.30px" width="24.2" height="24.2" viewBox="0 0 24 24" preserveAspectRatio="none"><filter id="bl3" x="0" y="0" width="1" height="1"><feGaussianBlur stdDeviation="0.75" edgeMode="duplicate"/></filter><g filter="url(#bl3)"><rect x="0" y="0" width="3.05" height="3.05" fill="#d8c8b0"/><rect x="3" y="0" width="3.05" height="3.05" fill="#e8ecf0"/><rect x="6" y="0" width="3.05" height="3.05" fill="#e4e8ec"/><rect x="9" y="0" width="3.05" height="3.05" fill="#e8ecf0"/><rect x="12" y="0" width="3.05" height="3.05" fill="#e4e8ee"/><rect x="15" y="0" width="3.05" height="3.05" fill="#dce0e6"/><rect x="18" y="0" width="3.05" height="3.05" fill="#2a2420"/><rect x="21" y="0" width="3.05" height="3.05" fill="#c8bcac"/><rect x="0" y="3" width="3.05" height="3.05" fill="#d4c4ac"/><rect x="3" y="3" width="3.05" height="3.05" fill="#e0e4e8"/><rect x="6" y="3" width="3.05" height="3.05" fill="#dce2e8"/><rect x="9" y="3" width="3.05" height="3.05" fill="#e0e6ea"/><rect x="12" y="3" width="3.05" height="3.05" fill="#dce4ea"/><rect x="15" y="3" width="3.05" height="3.05" fill="#d4dce4"/><rect x="18" y="3" width="3.05" height="3.05" fill="#3a322a"/><rect x="21" y="3" width="3.05" height="3.05" fill="#c0b8a8"/><rect x="0" y="6" width="3.05" height="3.05" fill="#c8b8a0"/><rect x="3" y="6" width="3.05" height="3.05" fill="#a8bccc"/><rect x="6" y="6" width="3.05" height="3.05" fill="#9ab4c4"/><rect x="9" y="6" width="3.05" height="3.05" fill="#a8c0d0"/><rect x="12" y="6" width="3.05" height="3.05" fill="#6e8cb0"/><rect x="15" y="6" width="3.05" height="3.05" fill="#a0b8c8"/><rect x="18" y="6" width="3.05" height="3.05" fill="#2e2824"/><rect x="21" y="6" width="3.05" height="3.05" fill="#b0b8c0"/><rect x="0" y="9" width="3.05" height="3.05" fill="#d0c0a8"/><rect x="3" y="9" width="3.05" height="3.05" fill="#b8c8d4"/><rect x="6" y="9" width="3.05" height="3.05" fill="#b0c4d0"/><rect x="9" y="9" width="3.05" height="3.05" fill="#a8bccc"/><rect x="12" y="9" width="3.05" height="3.05" fill="#b0c4d0"/><rect x="15" y="9" width="3.05" height="3.05" fill="#98a8b4"/><rect x="18" y="9" width="3.05" height="3.05" fill="#2a2622"/><rect x="21" y="9" width="3.05" height="3.05" fill="#a0b0c0"/><rect x="0" y="12" width="3.05" height="3.05" fill="#c8b8a0"/><rect x="3" y="12" width="3.05" height="3.05" fill="#a89478"/><rect x="6" y="12" width="3.05" height="3.05" fill="#c0ccd4"/><rect x="9" y="12" width="3.05" height="3.05" fill="#b8c8d0"/><rect x="12" y="12" width="3.05" height="3.05" fill="#c8d4dc"/><rect x="15" y="12" width="3.05" height="3.05" fill="#b8c4cc"/><rect x="18" y="12" width="3.05" height="3.05" fill="#3a3028"/><rect x="21" y="12" width="3.05" height="3.05" fill="#6a8ab0"/><rect x="0" y="15" width="3.05" height="3.05" fill="#d4c4ac"/><rect x="3" y="15" width="3.05" height="3.05" fill="#b0a088"/><rect x="6" y="15" width="3.05" height="3.05" fill="#1e1a18"/><rect x="9" y="15" width="3.05" height="3.05" fill="#2a2420"/><rect x="12" y="15" width="3.05" height="3.05" fill="#b8b0a0"/><rect x="15" y="15" width="3.05" height="3.05" fill="#a89878"/><rect x="18" y="15" width="3.05" height="3.05" fill="#2e2822"/><rect x="21" y="15" width="3.05" height="3.05" fill="#c0ccd8"/><rect x="0" y="18" width="3.05" height="3.05" fill="#e0dcd8"/><rect x="3" y="18" width="3.05" height="3.05" fill="#d8dce4"/><rect x="6" y="18" width="3.05" height="3.05" fill="#c8ccd4"/><rect x="9" y="18" width="3.05" height="3.05" fill="#d0c4ac"/><rect x="12" y="18" width="3.05" height="3.05" fill="#c8b490"/><rect x="15" y="18" width="3.05" height="3.05" fill="#a8a090"/><rect x="18" y="18" width="3.05" height="3.05" fill="#3a2e24"/><rect x="21" y="18" width="3.05" height="3.05" fill="#d8e0e8"/><rect x="0" y="21" width="3.05" height="3.05" fill="#dce0e8"/><rect x="3" y="21" width="3.05" height="3.05" fill="#e0e4ec"/><rect x="6" y="21" width="3.05" height="3.05" fill="#d8dce4"/><rect x="9" y="21" width="3.05" height="3.05" fill="#dce0e8"/><rect x="12" y="21" width="3.05" height="3.05" fill="#d8dce4"/><rect x="15" y="21" width="3.05" height="3.05" fill="#dcdce0"/><rect x="18" y="21" width="3.05" height="3.05" fill="#c8c0b0"/><rect x="21" y="21" width="3.05" height="3.05" fill="#e4e8ee"/></g></svg>
<div class="t" style="left:442.00px;top:234.56px;font-size:7.000px;color:#50575e;font-family:'Liberation Sans',sans-serif;font-weight:normal;transform:scaleX(0.9039);-webkit-text-stroke-width:0.08px;">2 guests • 1 bed • 1 bath</div>
<div class="t" style="left:553.75px;top:234.56px;font-size:7.000px;color:#50575e;font-family:'Liberation Sans',sans-serif;font-weight:normal;transform:scaleX(0.8625);-webkit-text-stroke-width:0.08px;">€ 123.00</div>
<div class="t" style="left:666.00px;top:234.56px;font-size:7.000px;color:#258a38;font-family:'Liberation Sans',sans-serif;font-weight:normal;transform:scaleX(0.8749);-webkit-text-stroke-width:0.08px;">87% (26/30 days)</div>
<div class="t" style="left:778.75px;top:234.56px;font-size:7.000px;transform:scaleX(0.9128);-webkit-text-stroke-width:0.08px;"><span style="color:#2271b1;font-weight:normal">1 total</span><span style="color:#f0a433;font-weight:normal"> (1 pending)</span></div>
<div class="t" style="left:890.50px;top:234.56px;font-size:7.000px;color:#50575e;font-family:'Liberation Sans',sans-serif;font-weight:normal;transform:scaleX(0.8685);-webkit-text-stroke-width:0.08px;">Published</div>
<div class="t" style="left:890.50px;top:244.46px;font-size:7.000px;color:#50575e;font-family:'Liberation Sans',sans-serif;font-weight:normal;transform:scaleX(0.9104);-webkit-text-stroke-width:0.08px;">2025/11/17 at 2:28 pm</div>
<div class="a" style="left:89.00px;top:269.90px;width:8.50px;height:8.20px;background:#fff;border:1px solid #c6c7ca;border-radius:2px;box-sizing:border-box"></div>
<div class="t" style="left:105.50px;top:269.69px;font-size:7.000px;color:#2271b1;font-family:'Liberation Mono',monospace;font-weight:bold;transform:scaleX(0.8034);">#103</div>
<div class="t" style="left:217.70px;top:269.26px;font-size:7.000px;color:#2271b1;font-family:'Liberation Sans',sans-serif;font-weight:normal;transform:scaleX(0.9382);-webkit-text-stroke-width:0.08px;-webkit-text-stroke-width:0.22px;">Sunset Cove</div>
<svg class="a" style="left:329.6px;top:267.80px" width="24.2" height="24.2" viewBox="0 0 24 24" preserveAspectRatio="none"><filter id="bl4" x="0" y="0" width="1" height="1"><feGaussianBlur stdDeviation="0.75" edgeMode="duplicate"/></filter><g filter="url(#bl4)"><rect x="0" y="0" width="3.05" height="3.05" fill="#5a3e2a"/><rect x="3" y="0" width="3.05" height="3.05" fill="#5e4230"/><rect x="6" y="0" width="3.05" height="3.05" fill="#4a3426"/><rect x="9" y="0" width="3.05" height="3.05" fill="#5e4432"/><rect x="12" y="0" width="3.05" height="3.05" fill="#5a4030"/><rect x="15" y="0" width="3.05" height="3.05" fill="#5e4432"/><rect x="18" y="0" width="3.05" height="3.05" fill="#5a4030"/><rect x="21" y="0" width="3.05" height="3.05" fill="#5a3e2c"/><rect x="0" y="3" width="3.05" height="3.05" fill="#5a3e2c"/><rect x="3" y="3" width="3.05" height="3.05" fill="#62483a"/><rect x="6" y="3" width="3.05" height="3.05" fill="#3a2a20"/><rect x="9" y="3" width="3.05" height="3.05" fill="#5e4434"/><rect x="12" y="3" width="3.05" height="3.05" fill="#62483a"/><rect x="15" y="3" width="3.05" height="3.05" fill="#6a5040"/><rect x="18" y="3" width="3.05" height="3.05" fill="#8a7040"/><rect x="21" y="3" width="3.05" height="3.05" fill="#5a4030"/><rect x="0" y="6" width="3.05" height="3.05" fill="#3a3a40"/><rect x="3" y="6" width="3.05" height="3.05" fill="#b8dce8"/><rect x="6" y="6" width="3.05" height="3.05" fill="#c0e0ea"/><rect x="9" y="6" width="3.05" height="3.05" fill="#b8dce6"/><rect x="12" y="6" width="3.05" height="3.05" fill="#bcdee8"/><rect x="15" y="6" width="3.05" height="3.05" fill="#c0e0ea"/><rect x="18" y="6" width="3.05" height="3.05" fill="#b8dce6"/><rect x="21" y="6" width="3.05" height="3.05" fill="#b0d8e4"/><rect x="0" y="9" width="3.05" height="3.05" fill="#4a4a50"/><rect x="3" y="9" width="3.05" height="3.05" fill="#c8e4ec"/><rect x="6" y="9" width="3.05" height="3.05" fill="#d0e8ee"/><rect x="9" y="9" width="3.05" height="3.05" fill="#d0e8ee"/><rect x="12" y="9" width="3.05" height="3.05" fill="#c8e4ec"/><rect x="15" y="9" width="3.05" height="3.05" fill="#d0e8ee"/><rect x="18" y="9" width="3.05" height="3.05" fill="#c8e4ec"/><rect x="21" y="9" width="3.05" height="3.05" fill="#b8dce4"/><rect x="0" y="12" width="3.05" height="3.05" fill="#4a3a30"/><rect x="3" y="12" width="3.05" height="3.05" fill="#6a5a4a"/><rect x="6" y="12" width="3.05" height="3.05" fill="#5a4a40"/><rect x="9" y="12" width="3.05" height="3.05" fill="#6a5a4a"/><rect x="12" y="12" width="3.05" height="3.05" fill="#5e5044"/><rect x="15" y="12" width="3.05" height="3.05" fill="#6a5a4a"/><rect x="18" y="12" width="3.05" height="3.05" fill="#5a4a40"/><rect x="21" y="12" width="3.05" height="3.05" fill="#6a5a50"/><rect x="0" y="15" width="3.05" height="3.05" fill="#5a4a40"/><rect x="3" y="15" width="3.05" height="3.05" fill="#d8d0c8"/><rect x="6" y="15" width="3.05" height="3.05" fill="#c0b8b0"/><rect x="9" y="15" width="3.05" height="3.05" fill="#a89888"/><rect x="12" y="15" width="3.05" height="3.05" fill="#b8b0a8"/><rect x="15" y="15" width="3.05" height="3.05" fill="#c8c0b8"/><rect x="18" y="15" width="3.05" height="3.05" fill="#8a7a70"/><rect x="21" y="15" width="3.05" height="3.05" fill="#a89888"/><rect x="0" y="18" width="3.05" height="3.05" fill="#4a3a30"/><rect x="3" y="18" width="3.05" height="3.05" fill="#e0dcd8"/><rect x="6" y="18" width="3.05" height="3.05" fill="#c8c0b8"/><rect x="9" y="18" width="3.05" height="3.05" fill="#6a5a50"/><rect x="12" y="18" width="3.05" height="3.05" fill="#c0b8b0"/><rect x="15" y="18" width="3.05" height="3.05" fill="#8a8078"/><rect x="18" y="18" width="3.05" height="3.05" fill="#d0ccc8"/><rect x="21" y="18" width="3.05" height="3.05" fill="#6a5040"/><rect x="0" y="21" width="3.05" height="3.05" fill="#a08878"/><rect x="3" y="21" width="3.05" height="3.05" fill="#e8e4e0"/><rect x="6" y="21" width="3.05" height="3.05" fill="#d0ccc8"/><rect x="9" y="21" width="3.05" height="3.05" fill="#a09890"/><rect x="12" y="21" width="3.05" height="3.05" fill="#e0dcd8"/><rect x="15" y="21" width="3.05" height="3.05" fill="#c8c4c0"/><rect x="18" y="21" width="3.05" height="3.05" fill="#d8d4d0"/><rect x="21" y="21" width="3.05" height="3.05" fill="#a07858"/></g></svg>
<div class="t" style="left:442.00px;top:269.06px;font-size:7.000px;color:#50575e;font-family:'Liberation Sans',sans-serif;font-weight:normal;transform:scaleX(0.9039);-webkit-text-stroke-width:0.08px;">4 guests • 2 bed • 1.5 bath</div>
<div class="t" style="left:553.75px;top:269.06px;font-size:7.000px;color:#50575e;font-family:'Liberation Sans',sans-serif;font-weight:normal;transform:scaleX(0.8625);-webkit-text-stroke-width:0.08px;">€ 235.00</div>
<div class="t" style="left:666.00px;top:269.06px;font-size:7.000px;color:#258a38;font-family:'Liberation Sans',sans-serif;font-weight:normal;transform:scaleX(0.8749);-webkit-text-stroke-width:0.08px;">103% (31/30 days)</div>
<div class="t" style="left:778.75px;top:269.06px;font-size:7.000px;transform:scaleX(0.9128);-webkit-text-stroke-width:0.08px;"><span style="color:#a7aaad;font-weight:normal">No bookings</span></div>
<div class="t" style="left:890.50px;top:269.06px;font-size:7.000px;color:#50575e;font-family:'Liberation Sans',sans-serif;font-weight:normal;transform:scaleX(0.8685);-webkit-text-stroke-width:0.08px;">Published</div>
<div class="t" style="left:890.50px;top:278.96px;font-size:7.000px;color:#50575e;font-family:'Liberation Sans',sans-serif;font-weight:normal;transform:scaleX(0.9104);-webkit-text-stroke-width:0.08px;">2025/11/17 at 11:32 am</div>
<div class="a" style="left:84.40px;top:322.50px;width:58.60px;height:14.40px;background:#fff;border:1px solid #aeb0b4;border-radius:1.5px;box-sizing:border-box"></div>
<div class="t" style="left:88.90px;top:326.66px;font-size:7.000px;color:#2c3338;font-family:'Liberation Sans',sans-serif;font-weight:normal;transform:scaleX(0.9380);-webkit-text-stroke-width:0.08px;">Bulk actions</div>
<svg class="a" style="left:133.50px;top:327.70px" width="6" height="4" viewBox="0 0 6 4"><path d="M0.5 0.9 L3 3.2 L5.5 0.9" fill="none" stroke="#3c434a" stroke-width="0.95"/></svg>
<div class="a" style="left:146.15px;top:322.50px;width:26.85px;height:14.40px;background:#f6f7f7;border:1px solid #7faace;border-radius:1.5px;box-sizing:border-box"></div>
<div class="t" style="left:151.70px;top:326.66px;font-size:7.000px;color:#2271b1;font-family:'Liberation Sans',sans-serif;font-weight:normal;transform:scaleX(0.9195);-webkit-text-stroke-width:0.08px;">Apply</div>
<div class="t" style="left:996.50px;top:325.96px;font-size:7.000px;color:#50575e;font-family:'Liberation Sans',sans-serif;font-weight:normal;transform:scaleX(0.8732);-webkit-text-stroke-width:0.08px;">5 items</div>
<div class="t" style="left:82.70px;top:471.36px;font-size:7.000px;color:#50575e;font-family:'Liberation Sans',sans-serif;font-weight:normal;transform:scaleX(0.8947);-webkit-text-stroke-width:0.08px;">Thank you for using</div>
<div class="t" style="left:139.70px;top:471.36px;font-size:7.000px;color:#3c434a;font-family:'Liberation Sans',sans-serif;font-weight:bold;transform:scaleX(0.8432);">EasyBooking Manager</div>
<div class="t" style="left:204.60px;top:471.36px;font-size:7.000px;color:#50575e;font-family:'Liberation Sans',sans-serif;font-weight:normal;transform:scaleX(0.8186);-webkit-text-stroke-width:0.08px;">v1.0.3.</div>
<div class="t" style="left:981.25px;top:471.06px;font-size:7.000px;color:#50575e;font-family:'Liberation Sans',sans-serif;font-weight:normal;transform:scaleX(0.8566);-webkit-text-stroke-width:0.08px;">Version 6.8.3</div>
</body></html>
